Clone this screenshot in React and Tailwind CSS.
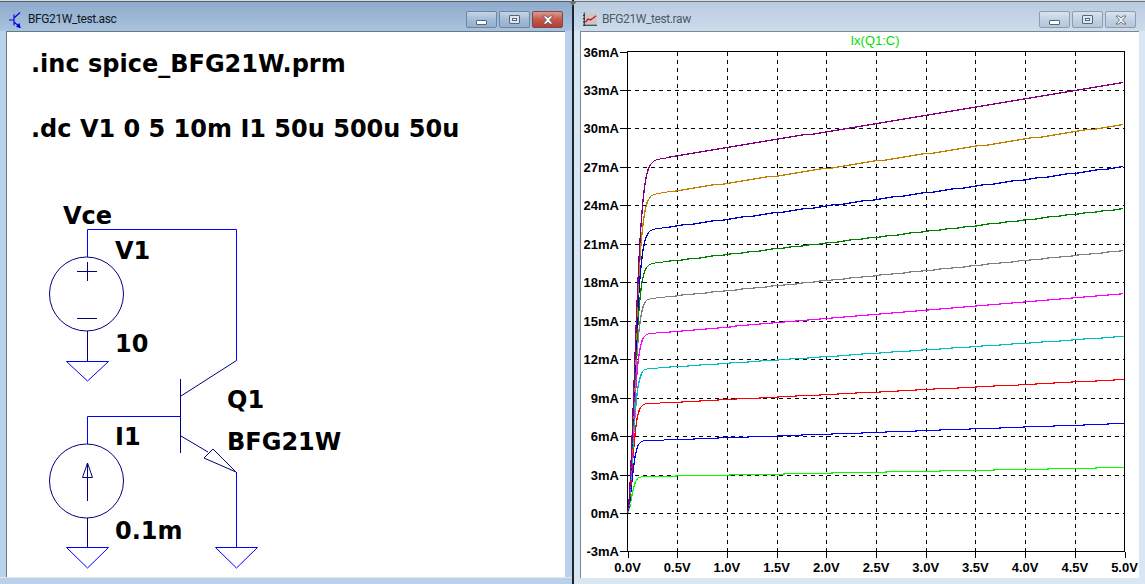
const GRID_X = Array.from({ length: 11 }, (_, i) => 627.5 + i * 49.7);
const GRID_Y = Array.from({ length: 14 }, (_, i) => 51.5 + i * 38.46);
const Y_LABELS = ["36mA", "33mA", "30mA", "27mA", "24mA", "21mA", "18mA", "15mA", "12mA", "9mA", "6mA", "3mA", "0mA", "-3mA"];
const X_LABELS = ["0.0V", "0.5V", "1.0V", "1.5V", "2.0V", "2.5V", "3.0V", "3.5V", "4.0V", "4.5V", "5.0V"];

// colour, y near the knee (x=650), y at the right edge
const TRACES = [
  ["#00ff00", 476, 467],
  ["#0000ff", 440, 423],
  ["#ff0000", 403, 379],
  ["#00bfbf", 368, 336],
  ["#ff00ff", 333, 293],
  ["#808080", 298, 250],
  ["#008000", 263, 208],
  ["#0000bf", 229, 166],
  ["#bf8000", 194, 124],
  ["#800080", 160, 82],
];

function tracePath(knee, end, index) {
  const slope = (knee - end) / 474;
  const plateau = 513 - knee - slope * 23;
  const k = 5.5 + index * 0.5;
  let d = "M627.5 513";
  for (let dx = 1; dx <= 497; dx += dx < 40 ? 1 : 6) {
    const rise = 1 - Math.exp(-Math.pow(dx / k, 1.8));
    const y = 513 - (plateau + slope * dx) * rise;
    d += ` L${627.5 + dx} ${Math.round(y) + 0.5}`;
  }
  return d;
}

function WinButton({ tone = "blue", children }) {
  const toneClass =
    tone === "red"
      ? "border-[#7d4a48] bg-linear-to-b from-[#dc9a8e] via-[#c4584a] to-[#b43f33]"
      : tone === "pale"
        ? "border-[#8b9db3] bg-linear-to-b from-[#d8e3ef] via-[#c3d2e3] to-[#b5c7da]"
        : "border-[#6f86a3] bg-linear-to-b from-[#c4d5e8] via-[#a4bcd8] to-[#94afcf]";
  return (
    <div className={`flex h-[17px] w-[31px] items-center justify-center rounded-[2px] border ${toneClass}`}>
      {children}
    </div>
  );
}

function MinGlyph() {
  return <div className="mt-[5px] h-[5px] w-[11px] rounded-[1px] border border-[#55657a] bg-white" />;
}

function MaxGlyph() {
  return (
    <div className="flex h-[9px] w-[11px] items-center justify-center rounded-[1px] border border-[#55657a] bg-[#dde6f0]">
      <div className="h-[3px] w-[5px] border border-[#55657a] bg-white" />
    </div>
  );
}

function CloseGlyph({ fill = "#ffffff" }) {
  return (
    <svg width="12" height="10" viewBox="0 0 12 10">
      <path d="M1 1 H4 L6 3 L8 1 H11 L7.5 5 L11 9 H8 L6 7 L4 9 H1 L4.5 5 Z" fill={fill} stroke="#4d5560" strokeWidth="0.7" />
    </svg>
  );
}

function SchematicIcon() {
  return (
    <svg width="14" height="16" viewBox="0 0 14 16" fill="none" stroke="#0000e0" strokeWidth="1.1">
      <path d="M0 8 H5 M5 2.5 V13.5 M5 6 L11 0.5 M5 10 L11 15" />
      <path d="M11 15.5 L8 14.5 L10 12 Z" fill="#0000e0" />
    </svg>
  );
}

function WaveIcon() {
  return (
    <svg width="17" height="17" viewBox="0 0 17 17" fill="none">
      <rect x="2" y="0" width="15" height="15" fill="#c9c9c9" />
      <path d="M1.5 0 V16 M0 15.5 H17 M0 3.5 H2 M0 7.5 H2 M0 11.5 H2" stroke="#000000" strokeWidth="1" />
      <path d="M3 12 L6 8 L9 9 L12 7 L16 4" stroke="#e01010" strokeWidth="1.6" />
    </svg>
  );
}

function TitleBar({ icon, title, titleClass, children }) {
  return (
    <div className="flex h-[29px] shrink-0 items-start justify-between pr-[9px] pt-[9px]">
      <div className={`flex items-center gap-[5px] pl-[9px] font-['Roboto',sans-serif] text-[12px] leading-[17px] tracking-[-0.4px] ${titleClass}`}>
        <div className="flex h-[17px] w-[14px] items-center justify-center">{icon}</div>
        <span>{title}</span>
      </div>
      <div className="flex gap-[2px]">{children}</div>
    </div>
  );
}

function Schematic() {
  const labels = [
    [".inc spice_BFG21W.prm", 31, 72],
    [".dc V1 0 5 10m I1 50u 500u 50u", 31, 137],
    ["Vce", 63, 224],
    ["V1", 115, 259],
    ["10", 115, 352],
    ["Q1", 227, 408],
    ["I1", 115, 445],
    ["BFG21W", 227, 450],
    ["0.1m", 115, 539],
  ];
  return (
    <svg width="558" height="545" viewBox="7 32 558 545" className="block" shapeRendering="auto">
      <g fill="none" stroke="#0000ff" strokeWidth="1">
        <path d="M87.5 257 V229.5 H236.5 V360.5" />
        <path d="M87.5 416.5 H181" />
        <path d="M87.5 416.5 V444" />
        <path d="M236.5 472 V547" />
        <path d="M66.5 361.5 H108.5 L87.5 381 Z" />
        <path d="M66.5 547.5 H108.5 L87.5 568 Z" />
        <path d="M215.5 547.5 H257.5 L236.5 568 Z" />
      </g>
      <g fill="none" stroke="#000080" strokeWidth="1">
        <circle cx="86.5" cy="294" r="37" />
        <path d="M77 271.5 H97 M87.5 262 V281 M77 318.5 H97 M87.5 331 V361" />
        <circle cx="86.5" cy="481" r="37" />
        <path d="M87.5 501 V463 L82.5 477.5 H92.5 L87.5 463 M87.5 518 V547" />
        <path d="M180.5 379 V453 M181 396 L236.5 360.5 M181 436 L208 452" />
        <path d="M236 472 L213 449 L204 458 Z" />
      </g>
      <g fill="#000000" fontFamily='"DejaVu Sans", Verdana, sans-serif' fontWeight="700" fontSize="24">
        {labels.map(([text, x, y]) => (
          <text key={text} x={x} y={y}>
            {text}
          </text>
        ))}
      </g>
    </svg>
  );
}

function Plot() {
  return (
    <svg width="558" height="546" viewBox="581 32 558 546" className="block">
      <g stroke="#000000" strokeWidth="1" shapeRendering="crispEdges">
        {GRID_Y.slice(1, -1).map((y) => (
          <line key={y} x1="627" x2="1124" y1={Math.round(y) + 0.5} y2={Math.round(y) + 0.5} strokeDasharray="4 4" />
        ))}
        {GRID_X.slice(1, -1).map((x) => (
          <line key={x} x1={Math.round(x) + 0.5} x2={Math.round(x) + 0.5} y1="52" y2="551" strokeDasharray="4 4" />
        ))}
        <rect x="627.5" y="51.5" width="497" height="500" fill="none" />
        {GRID_Y.map((y) => (
          <line key={y} x1="620" x2="627" y1={Math.round(y) + 0.5} y2={Math.round(y) + 0.5} />
        ))}
        {GRID_X.map((x) => (
          <line key={x} x1={Math.round(x) + 0.5} x2={Math.round(x) + 0.5} y1="552" y2="558" />
        ))}
      </g>
      <g fill="none" strokeWidth="1.3" shapeRendering="crispEdges">
        {TRACES.map(([color, knee, end], i) => (
          <path key={color} d={tracePath(knee, end, i)} stroke={color} />
        ))}
      </g>
      <g fill="#000000" fontFamily='"Liberation Sans", Arial, sans-serif' fontWeight="700" fontSize="13">
        {Y_LABELS.map((label, i) => (
          <text key={label} x="619" y={GRID_Y[i] + 5} textAnchor="end">
            {label}
          </text>
        ))}
        {X_LABELS.map((label, i) => (
          <text key={label} x={GRID_X[i]} y="572" textAnchor="middle">
            {label}
          </text>
        ))}
      </g>
      <text x="875" y="45" textAnchor="middle" fill="#00e000" fontSize="13" fontFamily='"Liberation Sans", Arial, sans-serif'>
        Ix(Q1:C)
      </text>
    </svg>
  );
}

export default function App() {
  return (
    <div className="relative flex h-[584px] w-[1145px] overflow-hidden bg-[#1c2430] font-['Noto_Sans',sans-serif]">
      <div className="flex w-[572px] shrink-0 flex-col border-t border-[#d8dde3] bg-[#b9d1ea]">
        <div className="border-t border-[#55606c] bg-linear-to-b from-[#8eabcc] to-[#a8c3df]">
          <TitleBar icon={<SchematicIcon />} title="BFG21W_test.asc" titleClass="text-[#101820]">
            <WinButton><MinGlyph /></WinButton>
            <WinButton><MaxGlyph /></WinButton>
            <WinButton tone="red"><CloseGlyph /></WinButton>
          </TitleBar>
        </div>
        <div className="ml-[6px] h-[546px] w-[559px] border-l border-t border-[#6b7784] bg-white">
          <Schematic />
        </div>
        <div className="h-[1px] bg-[#e4e8ec]" />
      </div>

      <div className="ml-[2px] flex w-[571px] shrink-0 flex-col border-t border-[#d8dde3] bg-[#d9e6f3]">
        <div className="border-t border-[#6a737c] bg-linear-to-b from-[#b9cbdf] to-[#cedcec]">
          <TitleBar icon={<WaveIcon />} title="BFG21W_test.raw" titleClass="text-[#4d5a68]">
            <WinButton tone="pale"><MinGlyph /></WinButton>
            <WinButton tone="pale"><MaxGlyph /></WinButton>
            <WinButton tone="pale"><CloseGlyph fill="#e8edf2" /></WinButton>
          </TitleBar>
        </div>
        <div className="ml-[6px] h-[547px] w-[559px] border-l border-t border-[#7d8894] bg-white">
          <Plot />
        </div>
      </div>

      <svg width="8" height="5" viewBox="0 0 8 5" className="absolute left-[569px] top-[1px]">
        <path d="M0 0 H8 L4 5 Z" fill="#6a6f75" />
      </svg>
    </div>
  );
}
